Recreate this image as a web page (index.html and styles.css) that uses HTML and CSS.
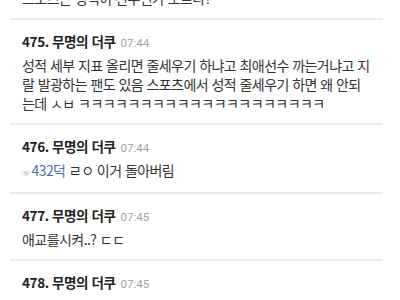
FILE: index.html
```html
<!DOCTYPE html>
<html lang="ko">
<head>
<meta charset="utf-8">
<link rel="stylesheet" href="styles.css">
</head>
<body>
<div class="list">
  <div class="item partial">
    <p class="body">스포츠는 성적이 전부인가 보르다?</p>
  </div>
  <div class="item">
    <div class="head"><span class="name">475. 무명의 더쿠</span><span class="time">07:44</span></div>
    <p class="body">성적 세부 지표 올리면 줄세우기 하냐고 최애선수 까는거냐고 지랄 발광하는 팬도 있음 스포츠에서 성적 줄세우기 하면 왜 안되는데 ㅅㅂ ㅋㅋㅋㅋㅋㅋㅋㅋㅋㅋㅋㅋㅋㅋㅋㅋㅋㅋㅋㅋ</p>
  </div>
  <div class="item">
    <div class="head"><span class="name">476. 무명의 더쿠</span><span class="time">07:44</span></div>
    <p class="body"><span class="ref"><span class="hand">☞</span>432덕</span> ㄹㅇ 이거 돌아버림</p>
  </div>
  <div class="item">
    <div class="head"><span class="name">477. 무명의 더쿠</span><span class="time">07:45</span></div>
    <p class="body">애교를시켜..? ㄷㄷ</p>
  </div>
  <div class="item">
    <div class="head"><span class="name">478. 무명의 더쿠</span><span class="time">07:45</span></div>
    <p class="body">요즘 이다니 좀 기러에도 많이지</p>
  </div>
</div>
</body>
</html>
```
FILE: styles.css
```css
html, body {
  margin: 0;
  padding: 0;
  background: #ffffff;
}
body {
  font-family: "Noto Sans CJK KR", "Noto Sans", sans-serif;
  overflow: hidden;
  height: 300px;
}
.list {
  margin: -11px 0 0 10px;
  width: 373px;
}
.item {
  padding: 11px 12px 10px 12px;
  border-bottom: 2px solid #ebebeb;
}
.item.partial {
  padding-top: 0;
}
.head {
  display: flex;
  align-items: baseline;
  gap: 5px;
  height: 20px;
  line-height: 20px;
  margin-bottom: 5px;
}
.name {
  font-size: 13.5px;
  font-weight: 700;
  color: #222;
  letter-spacing: -0.4px;
}
.time {
  font-family: "Roboto", "Noto Sans", sans-serif;
  font-size: 11.5px;
  color: #a0a0a0;
}
.body {
  margin: 0;
  font-size: 14px;
  line-height: 19px;
  color: #333;
  letter-spacing: -0.55px;
  word-break: break-all;
}
.ref {
  color: #4472a8;
}
.hand {
  font-size: 9px;
  color: #8a9bb0;
  margin-right: 1px;
}
```
